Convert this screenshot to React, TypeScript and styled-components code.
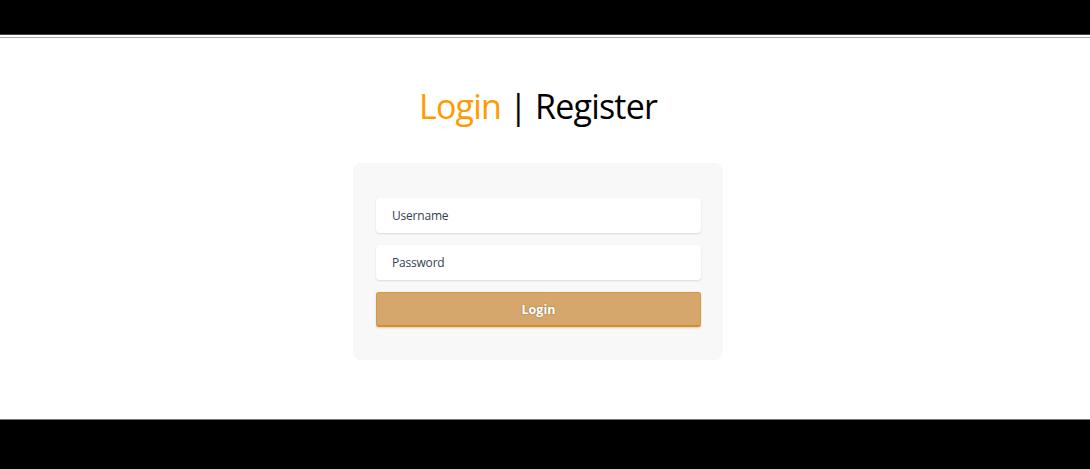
import React from "react";
import styled, { createGlobalStyle } from "styled-components";

const Global = createGlobalStyle`
  html, body { margin: 0; padding: 0; background: #fff; }
  body { font-family: "Open Sans", "Noto Sans", sans-serif; }
  * { box-sizing: border-box; }
`;

const Page = styled.div`
  display: flex;
  flex-direction: column;
  height: 469px;
  overflow: hidden;
`;

const TopBar = styled.header`
  height: 38px;
  flex: none;
  background: #000;
  border-bottom: 1px solid #aaa;
  box-shadow: inset 0 -2px 0 #fff, inset 0 -3px 0 #444;
`;

const Main = styled.main`
  flex: 1;
  display: flex;
  flex-direction: column;
  align-items: center;
  padding: 44px 14px 0 0;
`;

const Title = styled.h1`
  margin: 0 0 33px;
  font-family: "Open Sans", sans-serif;
  font-weight: 400;
  font-size: 34px;
  letter-spacing: -0.8px;
  line-height: 48px;
  color: #000;
`;

const TitleLink = styled.span<{ $active?: boolean }>`
  color: ${(p) => (p.$active ? "#ff9a00" : "#000")};
`;

const Card = styled.form`
  width: 370px;
  background: #f8f8f8;
  border-radius: 8px;
  padding: 35px 22px 33px 23px;
  display: flex;
  flex-direction: column;
  gap: 12px;
`;

const Input = styled.input`
  height: 35px;
  width: 100%;
  border: none;
  border-radius: 4px;
  background: #fff;
  box-shadow: 0 1px 2px rgba(0, 0, 0, 0.12);
  padding: 0 16px;
  font-family: "Open Sans", sans-serif;
  font-size: 12px;
  letter-spacing: -0.2px;
  color: #2b3440;
  outline: none;
  &::placeholder { color: #344050; opacity: 1; }
`;

const Button = styled.button`
  height: 35px;
  width: 100%;
  border: 1px solid #d49a40;
  border-bottom: 2px solid #d98e22;
  border-radius: 3px;
  background: #d5a76d;
  color: #fff;
  font-family: "Open Sans", sans-serif;
  font-weight: 700;
  font-size: 12.5px;
  text-shadow: 0 0 2px rgba(0, 0, 0, 0.35);
  box-shadow: 0 1px 2px rgba(0, 0, 0, 0.15);
  cursor: pointer;
`;

const Footer = styled.footer`
  height: 50px;
  flex: none;
  background: #000;
  border-top: 1px solid #777;
`;

export default function App() {
  return (
    <Page>
      <Global />
      <TopBar />
      <Main>
        <Title>
          <TitleLink $active>Login</TitleLink> | <TitleLink>Register</TitleLink>
        </Title>
        <Card onSubmit={(e) => e.preventDefault()}>
          <Input placeholder="Username" />
          <Input type="password" placeholder="Password" />
          <Button type="submit">Login</Button>
        </Card>
      </Main>
      <Footer />
    </Page>
  );
}
